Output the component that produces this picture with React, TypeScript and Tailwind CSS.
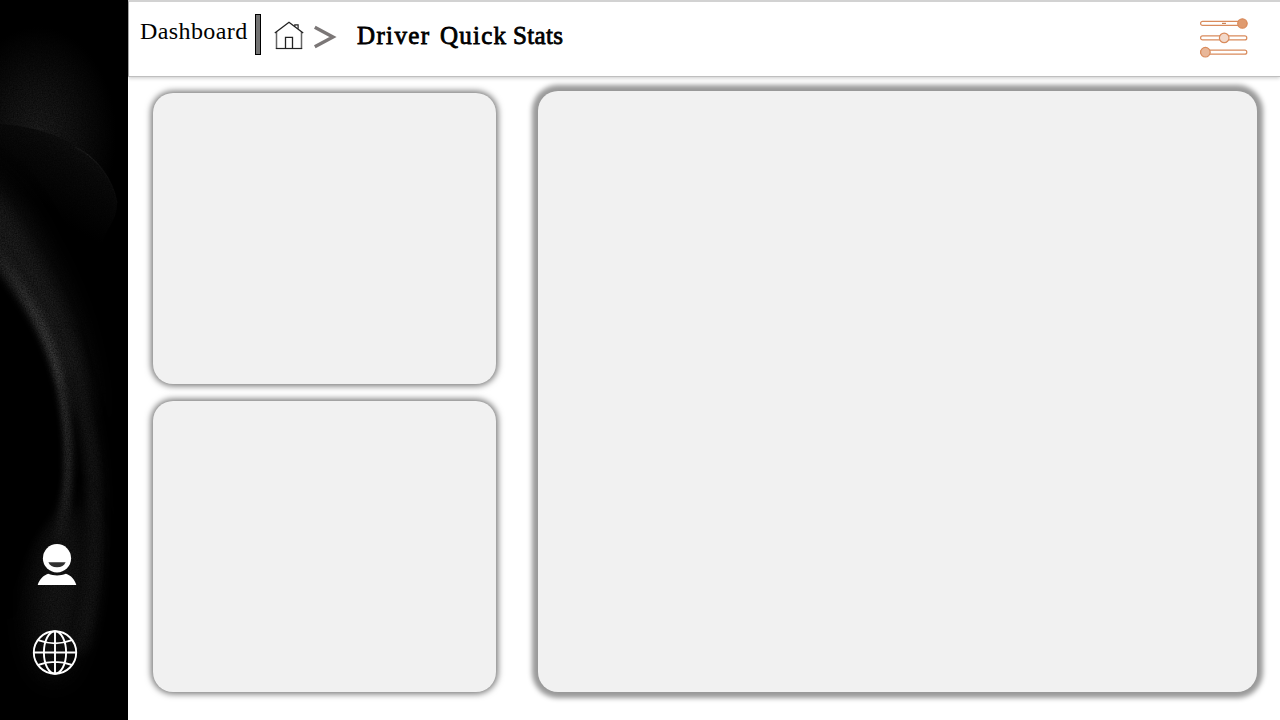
import React from "react";

function SidebarArt() {
  return (
    <svg className="absolute inset-0 h-full w-full" viewBox="0 0 128 720" fill="none" aria-hidden="true">
      <defs>
        <filter id="wide" filterUnits="userSpaceOnUse" x="-60" y="-60" width="260" height="840" colorInterpolationFilters="sRGB"><feGaussianBlur stdDeviation="14" /></filter>
        <filter id="soft" filterUnits="userSpaceOnUse" x="-60" y="-60" width="260" height="840" colorInterpolationFilters="sRGB"><feGaussianBlur stdDeviation="7" /></filter>
        <filter id="fine" filterUnits="userSpaceOnUse" x="-60" y="-60" width="260" height="840" colorInterpolationFilters="sRGB"><feGaussianBlur stdDeviation="3.5" /></filter>
        <filter id="grain" filterUnits="userSpaceOnUse" x="0" y="0" width="128" height="720" colorInterpolationFilters="sRGB">
          <feTurbulence type="fractalNoise" baseFrequency="0.75" numOctaves="2" seed="4" />
          <feColorMatrix values="1 0 0 0 0  1 0 0 0 0  1 0 0 0 0  0 0 0 0 1" result="n" />
          <feComposite in="SourceGraphic" in2="n" operator="arithmetic" k1="1.4" k2="0.3" k3="0" k4="0" />
          <feColorMatrix values="1 0 0 0 0  0 1 0 0 0  0 0 1 0 0  0 0 0 0 1" />
        </filter>
        <radialGradient id="haze" cx="0" cy="0" r="1" gradientUnits="userSpaceOnUse" gradientTransform="translate(38 135) scale(78 108)">
          <stop stopColor="#171717" /><stop offset=".45" stopColor="#0e0e0e" /><stop offset="1" stopColor="#000" />
        </radialGradient>
        <linearGradient id="dome" x1="90" y1="140" x2="48" y2="215" gradientUnits="userSpaceOnUse">
          <stop stopColor="#0f0f0f" /><stop offset=".35" stopColor="#080808" /><stop offset="1" stopColor="#000" />
        </linearGradient>
        <linearGradient id="rim" x1="30" y1="0" x2="118" y2="0" gradientUnits="userSpaceOnUse">
          <stop stopColor="#161616" stopOpacity="0" /><stop offset=".65" stopColor="#191919" /><stop offset="1" stopColor="#080808" />
        </linearGradient>
        <linearGradient id="fold" x1="0" y1="240" x2="0" y2="560" gradientUnits="userSpaceOnUse">
          <stop stopColor="#181818" /><stop offset=".22" stopColor="#2c2c2c" /><stop offset=".4" stopColor="#343434" /><stop offset=".65" stopColor="#242424" /><stop offset="1" stopColor="#1c1c1c" />
        </linearGradient>
      </defs>
      <g filter="url(#grain)">
        <rect width="128" height="720" fill="#000" />
        <rect width="128" height="250" fill="url(#haze)" />
        <path d="M0 124C62 128 110 158 117 203C118 222 102 230 100 255H0Z" fill="url(#dome)" />
        <path d="M75 147C98 158 113 180 117 203" stroke="url(#rim)" strokeWidth="1.2" />
        <path d="M-30 170C5 185 25 220 43 258C67 302 86 354 88 420L60 390C48 340 26 300 -30 260Z" fill="#171717" filter="url(#wide)" />
        <path d="M-8 195C12 234 45 270 64 322C78 354 80 391 78 416C61 370 45 325 -8 250Z" fill="#171717" filter="url(#soft)" />
        <path d="M-10 242C24 292 54 337 62 392C72 445 68 500 59 540" stroke="url(#fold)" strokeWidth="10" filter="url(#fine)" />
        <path d="M62 340C78 385 92 430 94 490C98 560 90 620 78 650" stroke="#161616" strokeWidth="12" filter="url(#soft)" />
        <path d="M70 375C86 410 93 450 94 505C96 560 90 600 84 630" stroke="#101010" strokeWidth="9" filter="url(#fine)" />
        <path d="M65 495C54 515 35 535 31 600C33 650 38 670 56 680C75 660 91 594 84 530Z" fill="#121212" filter="url(#wide)" />
        <path d="M-30 236C15 297 47 341 56 402C65 461 60 500 50 518C30 540 18 570 8 610L-30 620Z" fill="#000" filter="url(#fine)" />
        <path d="M60 386C73 410 79 450 79 500" stroke="#000" strokeWidth="3" opacity=".5" filter="url(#fine)" />
      </g>
    </svg>
  );
}

function PersonIcon() {
  return (
    <svg width="40" height="42" viewBox="0 0 40 42" className="relative" aria-label="Profile">
      <ellipse cx="20" cy="14.2" rx="14.1" ry="14.2" fill="white" />
      <path d="M11.4 18.2H28.6C27.3 21.5 24.3 23.2 20 23.2S12.7 21.5 11.4 18.2Z" fill="#303030" />
      <path d="M.7 41C2.3 35.5 6.2 31.3 11.2 29.7C17 32 23.2 32 28.9 29.7C34 31.3 37.8 35.5 39.3 41Z" fill="white" />
    </svg>
  );
}

function GlobeIcon() {
  return (
    <svg width="46" height="46" viewBox="0 0 46 46" className="relative" fill="none" stroke="white" strokeWidth="1.9" aria-label="Language">
      <circle cx="23" cy="22.5" r="21.2" />
      <ellipse cx="23" cy="22.5" rx="11.1" ry="21.2" />
      <path d="M23 1.3V43.7M1.8 22.5H44.2M6 10.2Q23 16.5 40 10.2M6 35Q23 28.8 40 35" />
    </svg>
  );
}

function HomeIcon() {
  return (
    <svg width="30" height="30" viewBox="0 0 30 30" fill="none" aria-label="Home">
      <path d="M2.5 12V28.5M27.5 12V28.5" stroke="#666" strokeWidth="1.5" />
      <path d="M1.8 28.5H28.2" stroke="#222" strokeWidth="1.2" />
      <path d="M.8 13L15 2.3L29.2 13" stroke="#222" strokeWidth="1.4" />
      <path d="M11.5 28V17.3H18.5V28" stroke="#222" strokeWidth="1.3" />
      <path d="M20.8 6.2V4.8H24.1V8.8" stroke="#222" strokeWidth="1.2" />
    </svg>
  );
}

function SlidersIcon() {
  return (
    <svg width="50" height="42" viewBox="0 0 50 42" fill="none" stroke="#d98b5c" strokeWidth="1.2" aria-label="Settings">
      <rect x="1.6" y="4.4" width="46.2" height="4" rx="2" fill="white" />
      <rect x="1.6" y="18.9" width="46.2" height="4" rx="2" fill="white" />
      <rect x="1.6" y="33.2" width="46.2" height="4" rx="2" fill="white" />
      <path d="M23 6.4H27" stroke="#c98459" />
      <circle cx="43.4" cy="6.5" r="4.7" fill="#df9b70" />
      <circle cx="25.2" cy="20.9" r="4.8" fill="#f2d8c9" />
      <circle cx="6.4" cy="35.2" r="4.8" fill="#e8b799" />
    </svg>
  );
}

export default function App() {
  return (
    <div className="flex h-[720px] w-[1280px] overflow-hidden bg-white font-['Liberation_Serif',serif] text-black">
      <aside className="relative flex w-32 shrink-0 flex-col bg-black pl-8 pt-[544px]">
        <SidebarArt />
        <div className="pl-[5px]"><PersonIcon /></div>
        <div className="pt-[44px]"><GlobeIcon /></div>
      </aside>
      <div className="flex min-w-0 flex-1 flex-col">
        <header className="flex h-[77px] shrink-0 items-start border-b border-l border-t-2 border-b-[#bfbfbf] border-l-[#a6a6a6] border-t-[#d2d2d2] bg-white shadow-[0_1px_4px_rgba(0,0,0,0.22)]">
          <span className="ml-[11px] mt-[14px] w-[115px] whitespace-nowrap text-[24px] leading-[30px] tracking-[0.4px]">Dashboard</span>
          <div className="mt-3 h-[41px] w-[6px] border border-black bg-[#737373]" />
          <div className="ml-[13px] mt-[18px]"><HomeIcon /></div>
          <svg className="ml-[10px] mt-[23px]" width="23" height="24" viewBox="0 0 23 24" fill="none" aria-hidden="true">
            <path d="M.8 2.2L19 12L.8 21.8" stroke="#7b7777" strokeWidth="3.4" />
          </svg>
          <h1 className="ml-[20px] mt-[19px] flex whitespace-nowrap text-[25px] font-normal leading-[30px] [-webkit-text-stroke:0.8px_black]">
            <span className="w-[83px] tracking-[1.35px]">Driver </span>
            <span className="w-[73px] tracking-[1.25px]">Quick </span>
            <span className="tracking-[0.35px]">Stats</span>
          </h1>
          <div className="ml-auto mr-[31px] mt-[15px]"><SlidersIcon /></div>
        </header>
        <main className="flex flex-1 gap-[42px] pb-7 pl-[25px] pr-[23px] pt-[14px]">
          <div className="flex w-[343px] flex-col gap-[17px] pt-[2px]">
            <section className="flex-1 rounded-[20px] bg-[#f1f1f1] shadow-[0_0_6px_2px_#777]" />
            <section className="flex-1 rounded-[20px] bg-[#f1f1f1] shadow-[0_0_6px_2px_#777]" />
          </div>
          <section className="flex-1 rounded-[20px] bg-[#f1f1f1] shadow-[0_0_5px_6px_#999]" />
        </main>
      </div>
    </div>
  );
}
